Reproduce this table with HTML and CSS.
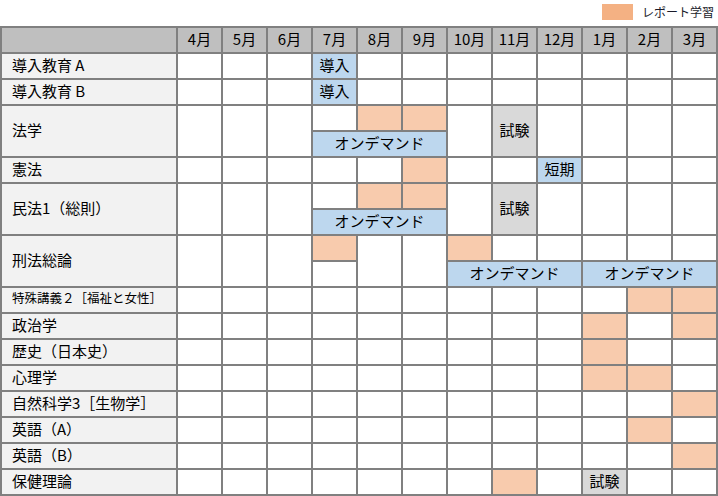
FILE: index.html
```html
<!DOCTYPE html>
<html lang="ja">
<head>
<meta charset="utf-8">
<title>年間スケジュール</title>
<link rel="stylesheet" href="styles.css">
</head>
<body>
<div class="legend">
  <span class="legend-swatch"></span>
  <span class="legend-text">レポート学習</span>
</div>
<div class="sched">
  <div class="hd"></div>
  <div class="hd m">4月</div><div class="hd m">5月</div><div class="hd m">6月</div><div class="hd m">7月</div>
  <div class="hd m">8月</div><div class="hd m">9月</div><div class="hd m">10月</div><div class="hd m">11月</div>
  <div class="hd m">12月</div><div class="hd m">1月</div><div class="hd m">2月</div><div class="hd m">3月</div>

  <div class="lbl">導入教育 A</div>
  <div class="c"></div><div class="c"></div><div class="c"></div><div class="c b">導入</div>
  <div class="c"></div><div class="c"></div><div class="c"></div><div class="c"></div>
  <div class="c"></div><div class="c"></div><div class="c"></div><div class="c"></div>

  <div class="lbl">導入教育 B</div>
  <div class="c"></div><div class="c"></div><div class="c"></div><div class="c b">導入</div>
  <div class="c"></div><div class="c"></div><div class="c"></div><div class="c"></div>
  <div class="c"></div><div class="c"></div><div class="c"></div><div class="c"></div>

  <div class="lbl r2">法学</div>
  <div class="c r2"></div><div class="c r2"></div><div class="c r2"></div><div class="c"></div>
  <div class="c o"></div><div class="c o"></div><div class="c r2"></div><div class="c g r2">試験</div>
  <div class="c r2"></div><div class="c r2"></div><div class="c r2"></div><div class="c r2"></div>
  <div class="c b s3">オンデマンド</div>

  <div class="lbl">憲法</div>
  <div class="c"></div><div class="c"></div><div class="c"></div><div class="c"></div>
  <div class="c"></div><div class="c o"></div><div class="c"></div><div class="c"></div>
  <div class="c b">短期</div><div class="c"></div><div class="c"></div><div class="c"></div>

  <div class="lbl r2">民法1（総則）</div>
  <div class="c r2"></div><div class="c r2"></div><div class="c r2"></div><div class="c"></div>
  <div class="c o"></div><div class="c o"></div><div class="c r2"></div><div class="c g r2">試験</div>
  <div class="c r2"></div><div class="c r2"></div><div class="c r2"></div><div class="c r2"></div>
  <div class="c b s3">オンデマンド</div>

  <div class="lbl r2">刑法総論</div>
  <div class="c r2"></div><div class="c r2"></div><div class="c r2"></div><div class="c o"></div>
  <div class="c r2"></div><div class="c r2"></div><div class="c o"></div><div class="c"></div>
  <div class="c"></div><div class="c"></div><div class="c"></div><div class="c"></div>
  <div class="c"></div>
  <div class="c b s3">オンデマンド</div>
  <div class="c b s3">オンデマンド</div>

  <div class="lbl small">特殊講義２［福祉と女性］</div>
  <div class="c"></div><div class="c"></div><div class="c"></div><div class="c"></div>
  <div class="c"></div><div class="c"></div><div class="c"></div><div class="c"></div>
  <div class="c"></div><div class="c"></div><div class="c o"></div><div class="c o"></div>

  <div class="lbl">政治学</div>
  <div class="c"></div><div class="c"></div><div class="c"></div><div class="c"></div>
  <div class="c"></div><div class="c"></div><div class="c"></div><div class="c"></div>
  <div class="c"></div><div class="c o"></div><div class="c"></div><div class="c o"></div>

  <div class="lbl">歴史（日本史）</div>
  <div class="c"></div><div class="c"></div><div class="c"></div><div class="c"></div>
  <div class="c"></div><div class="c"></div><div class="c"></div><div class="c"></div>
  <div class="c"></div><div class="c o"></div><div class="c"></div><div class="c"></div>

  <div class="lbl">心理学</div>
  <div class="c"></div><div class="c"></div><div class="c"></div><div class="c"></div>
  <div class="c"></div><div class="c"></div><div class="c"></div><div class="c"></div>
  <div class="c"></div><div class="c o"></div><div class="c o"></div><div class="c"></div>

  <div class="lbl">自然科学3［生物学］</div>
  <div class="c"></div><div class="c"></div><div class="c"></div><div class="c"></div>
  <div class="c"></div><div class="c"></div><div class="c"></div><div class="c"></div>
  <div class="c"></div><div class="c"></div><div class="c"></div><div class="c o"></div>

  <div class="lbl">英語（A）</div>
  <div class="c"></div><div class="c"></div><div class="c"></div><div class="c"></div>
  <div class="c"></div><div class="c"></div><div class="c"></div><div class="c"></div>
  <div class="c"></div><div class="c"></div><div class="c o"></div><div class="c"></div>

  <div class="lbl">英語（B）</div>
  <div class="c"></div><div class="c"></div><div class="c"></div><div class="c"></div>
  <div class="c"></div><div class="c"></div><div class="c"></div><div class="c"></div>
  <div class="c"></div><div class="c"></div><div class="c"></div><div class="c o"></div>

  <div class="lbl">保健理論</div>
  <div class="c"></div><div class="c"></div><div class="c"></div><div class="c"></div>
  <div class="c"></div><div class="c"></div><div class="c"></div><div class="c o"></div>
  <div class="c"></div><div class="c g">試験</div><div class="c"></div><div class="c"></div>
</div>
</body>
</html>
```

FILE: styles.css
```css
html, body {
  margin: 0;
  padding: 0;
  background: #ffffff;
}

body {
  font-family: "Noto Sans CJK JP", "Noto Sans", sans-serif;
  color: #000000;
  width: 718px;
}

.legend {
  height: 26px;
  display: flex;
  justify-content: flex-end;
  align-items: center;
  gap: 9px;
  padding-right: 4px;
  padding-bottom: 2px;
  box-sizing: border-box;
}

.legend-swatch {
  width: 31px;
  height: 16px;
  background: #f4b183;
}

.legend-text {
  font-size: 12px;
  line-height: 16px;
  color: #1a1a2a;
}

.sched {
  display: grid;
  grid-template-columns: 174px repeat(12, 43px);
  grid-auto-rows: 24px;
  gap: 2px;
  padding: 2px;
  background: #808080;
  width: max-content;
}

.sched > div {
  display: flex;
  align-items: center;
  font-size: 15px;
  line-height: 1;
  white-space: nowrap;
  overflow: hidden;
  padding-bottom: 4px;
  box-sizing: border-box;
}

.hd {
  background: #bfbfbf;
}

.m {
  justify-content: center;
}

.lbl {
  background: #f2f2f2;
  padding-left: 10px;
}

.lbl.small {
  font-size: 12.5px;
}

.c {
  background: #ffffff;
  justify-content: center;
}

.o {
  background: #f8cbad;
}

.b {
  background: #bdd7ee;
}

.g {
  background: #d9d9d9;
}

.r2 {
  grid-row: span 2;
}

.s3 {
  grid-column: span 3;
}
```
